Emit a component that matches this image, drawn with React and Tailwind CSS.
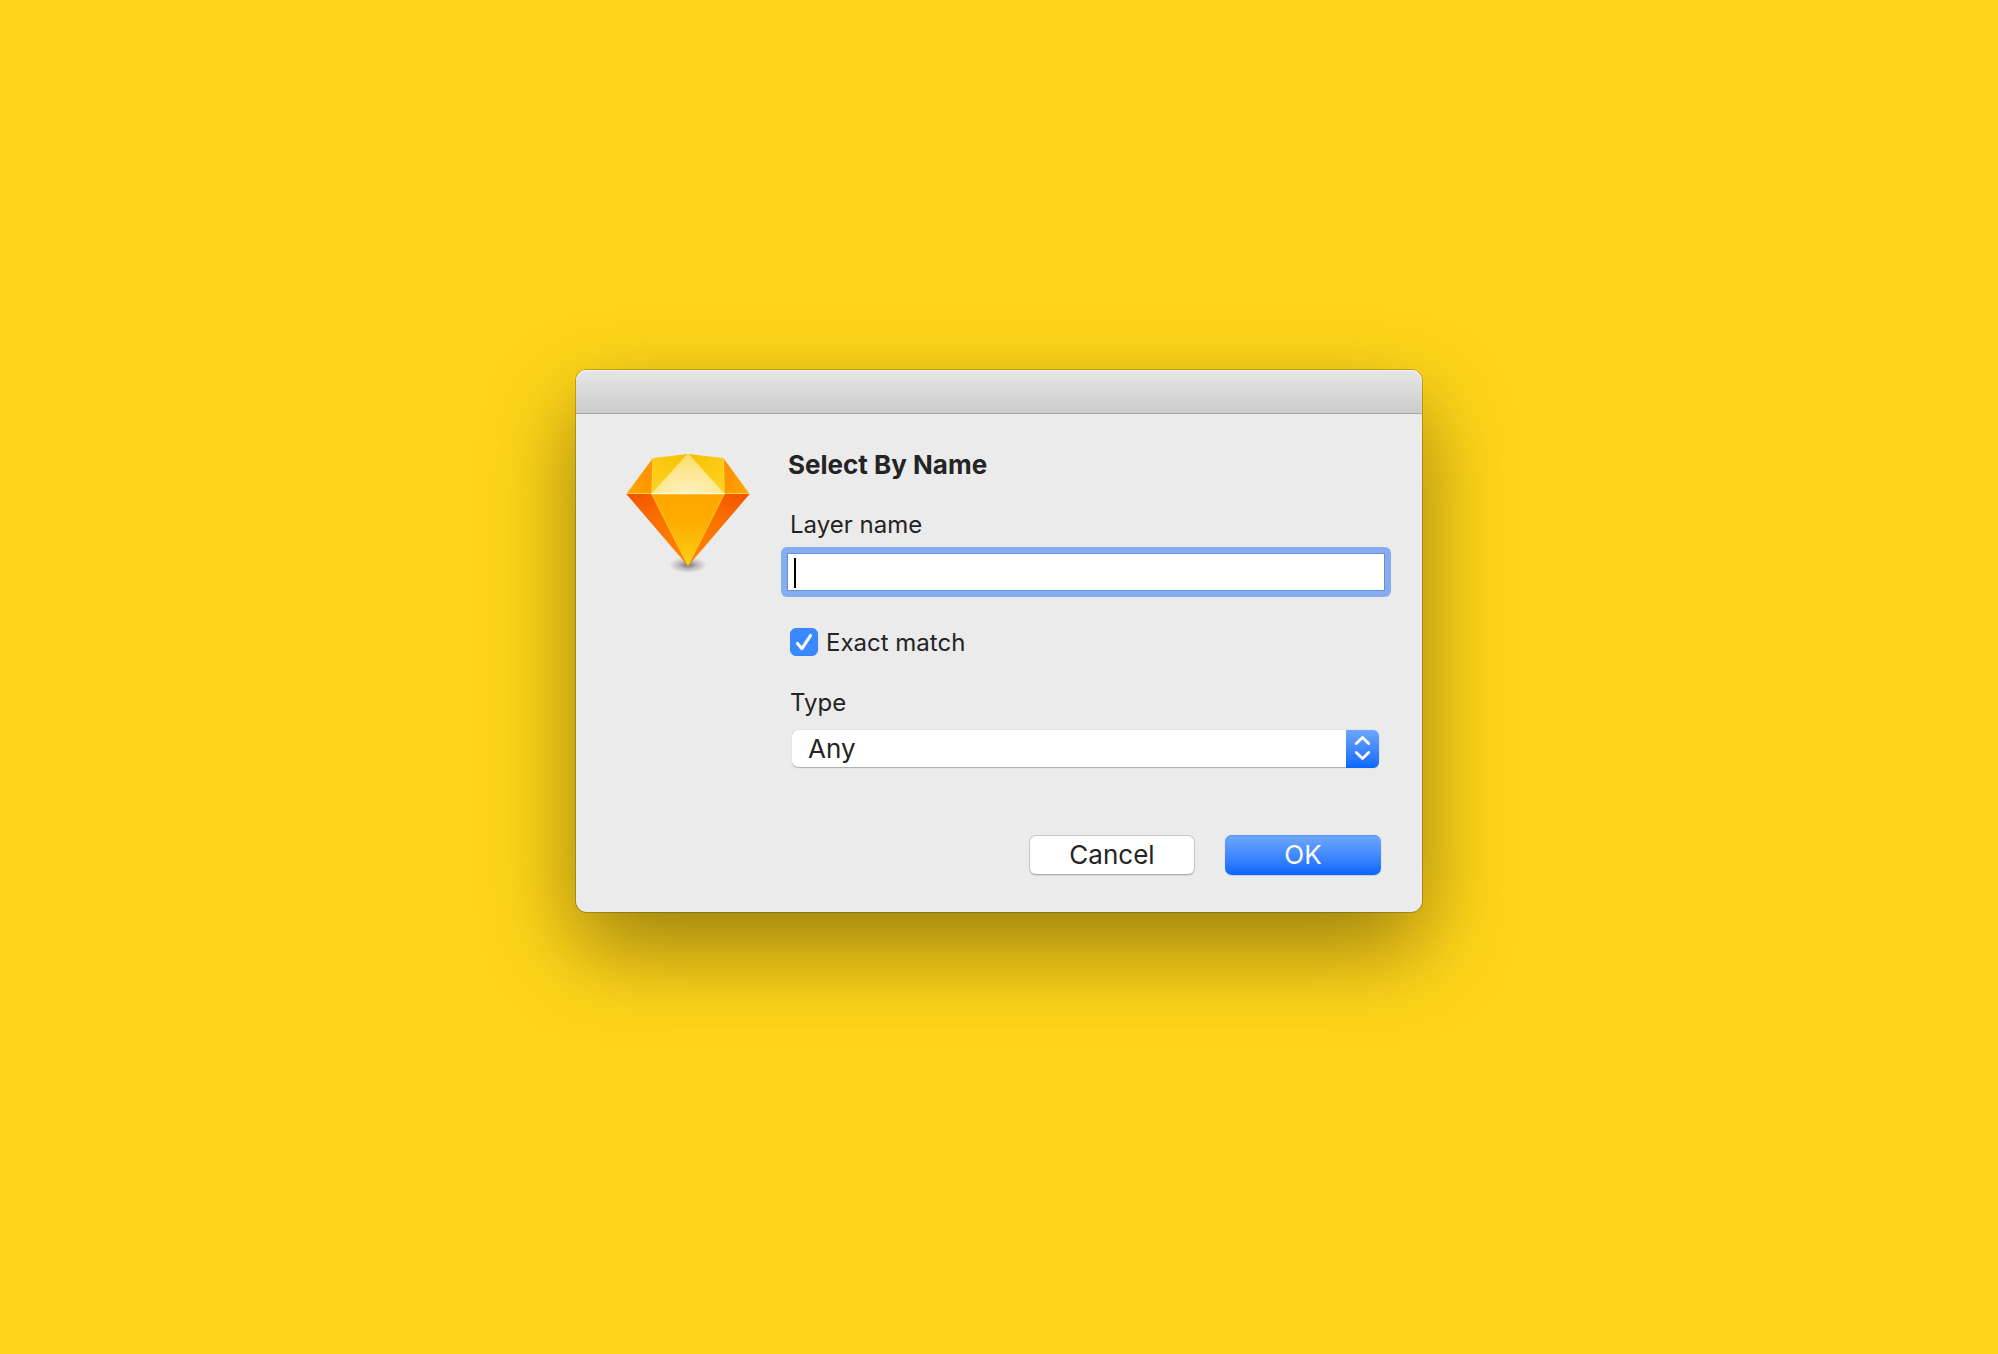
function SketchLogo() {
  return (
    <svg viewBox="0 0 160 140" className="w-40 shrink-0" role="img" aria-label="Sketch">
      <defs>
        <linearGradient id="front" x1="0" y1="0" x2="0" y2="1">
          <stop offset="0" stopColor="#ffa600" />
          <stop offset="0.4" stopColor="#ffad00" />
          <stop offset="1" stopColor="#fdd015" />
        </linearGradient>
        <linearGradient id="sideLeft" x1="0" y1="0" x2="0.6" y2="1">
          <stop offset="0" stopColor="#f25200" />
          <stop offset="0.5" stopColor="#fb7000" />
          <stop offset="1" stopColor="#ff8300" />
        </linearGradient>
        <linearGradient id="sideRight" x1="1" y1="0" x2="0.4" y2="1">
          <stop offset="0" stopColor="#f25200" />
          <stop offset="0.5" stopColor="#fb7000" />
          <stop offset="1" stopColor="#ff8300" />
        </linearGradient>
        <linearGradient id="crownLeft" x1="1" y1="0" x2="0" y2="1">
          <stop offset="0" stopColor="#ff9000" />
          <stop offset="0.5" stopColor="#ff9800" />
          <stop offset="1" stopColor="#ffac00" />
        </linearGradient>
        <linearGradient id="crownRight" x1="0" y1="0" x2="1" y2="1">
          <stop offset="0" stopColor="#ff9000" />
          <stop offset="0.5" stopColor="#ff9800" />
          <stop offset="1" stopColor="#ffac00" />
        </linearGradient>
        <linearGradient id="facetLeft" x1="1" y1="0" x2="0" y2="1">
          <stop offset="0" stopColor="#f9c000" />
          <stop offset="1" stopColor="#fed226" />
        </linearGradient>
        <linearGradient id="facetRight" x1="0" y1="0" x2="1" y2="1">
          <stop offset="0" stopColor="#f9c000" />
          <stop offset="1" stopColor="#fed226" />
        </linearGradient>
        <radialGradient id="table" cx="0.5" cy="1" r="0.95">
          <stop offset="0" stopColor="#fef1c0" />
          <stop offset="1" stopColor="#fcdf70" />
        </radialGradient>
        <radialGradient id="ground">
          <stop offset="0" stopColor="#000" stopOpacity="0.5" />
          <stop offset="0.5" stopColor="#000" stopOpacity="0.2" />
          <stop offset="1" stopColor="#000" stopOpacity="0" />
        </radialGradient>
      </defs>
      <ellipse cx="78" cy="125" rx="19" ry="8" fill="url(#ground)" />
      <path d="M16.3 54H42L78 126Z" fill="url(#sideLeft)" />
      <path d="M139.7 54H114L78 126Z" fill="url(#sideRight)" />
      <path d="M41.6 54H114.4L78 126.3Z" fill="url(#front)" />
      <path d="M16.3 54L43 18L42 54Z" fill="url(#crownLeft)" />
      <path d="M139.7 54L113.3 18L114 54Z" fill="url(#crownRight)" />
      <path d="M43 18L78 14L41.6 54Z" fill="url(#facetLeft)" />
      <path d="M113.3 18L78 14L114.4 54Z" fill="url(#facetRight)" />
      <path d="M78 14L114.4 54H41.6Z" fill="url(#table)" />
      <g fill="none" strokeLinejoin="round">
        <path d="M41.8 54L78 125.5L114.2 54" stroke="#ffc21c" strokeWidth="1" />
        <path d="M43 18L42 54M113.3 18L114.2 54" stroke="#fed737" strokeWidth="1.2" />
        <path d="M17 53.5H42M114 53.5H139" stroke="#ffce2e" strokeWidth="1.2" />
        <path d="M42 53.5L78 14L114.2 53.5" stroke="#fee36a" strokeWidth="1" />
        <path d="M41.6 53.5H114.4" stroke="#fffbd8" strokeWidth="1.4" />
      </g>
    </svg>
  );
}

export default function App() {
  return (
    <main className="flex min-h-screen items-center justify-center bg-[#ffd519] pb-[72px] font-['Inter','Liberation_Sans',sans-serif] text-[#242424]">
      <form
        role="dialog"
        aria-labelledby="title"
        onSubmit={(e) => e.preventDefault()}
        className="w-full max-w-[846px] rounded-[11px] bg-[#ebebeb] shadow-[0_0_0_1px_rgba(0,0,0,0.2),0_36px_90px_rgba(0,0,0,0.41)]"
      >
        <div className="h-11 rounded-t-[11px] border-b border-[#a9a9a9] bg-linear-to-b from-[#e6e6e6] to-[#cccccc] shadow-[inset_0_1px_0_#f5f5f5]" />
        <div className="flex items-start gap-[17px] pr-[37px] pb-[37px] pl-[34px]">
          <div className="pt-[26px]">
            <SketchLogo />
          </div>
          <div className="flex min-w-0 flex-1 flex-col pt-[35px]">
            <h1 id="title" className="pl-px text-[26px] leading-8 font-bold">
              Select By Name
            </h1>
            <label htmlFor="layer" className="mt-7 pl-[3px] text-2xl leading-8">
              Layer name
            </label>
            <div className="relative -mx-1.5 mt-1.5 flex rounded-md bg-[#86adf2] p-1.5">
              <input
                id="layer"
                type="text"
                className="h-[38px] w-full border border-[#6890d8] bg-white px-2 text-2xl caret-transparent outline-none"
              />
              <span className="absolute top-[11px] left-[13px] h-[30px] w-[2px] bg-black" />
            </div>
            <div className="mt-[31px] flex items-start gap-2 pl-[3px]">
              <span className="relative flex">
                <input
                  id="exact"
                  type="checkbox"
                  defaultChecked
                  className="peer size-7 appearance-none rounded-md border border-[#b5b5b5] bg-white checked:border-[#3584fb] checked:bg-[#3b89ff]"
                />
                <svg
                  viewBox="0 0 28 28"
                  fill="none"
                  className="pointer-events-none absolute inset-0 hidden peer-checked:block"
                >
                  <path
                    d="M7.5 15.5L12 20.7L20.5 7.5"
                    stroke="#fff"
                    strokeWidth="3.1"
                    strokeLinecap="round"
                    strokeLinejoin="round"
                  />
                </svg>
              </span>
              <label htmlFor="exact" className="text-2xl leading-[30px]">
                Exact match
              </label>
            </div>
            <label htmlFor="type" className="mt-[29px] pl-[3px] text-2xl leading-8">
              Type
            </label>
            <div className="relative mt-[11px] mr-[6px] ml-[5px] flex">
              <select
                id="type"
                className="h-[38px] w-full appearance-none rounded-md bg-white pr-12 pl-4 text-[26px] leading-[38px] shadow-[0_0_1px_rgba(0,0,0,0.3),inset_0_-1px_0_#b0b0b0]"
              >
                <option>Any</option>
              </select>
              <span className="pointer-events-none absolute inset-y-0 right-0 w-[33px] rounded-r-md bg-linear-to-b from-[#6da5fb] to-[#0467ff]">
                <svg viewBox="0 0 33 38" fill="none" className="size-full">
                  <path
                    d="M10.3 13.5L16.5 7.5L22.7 13.5M10.3 22.5L16.5 28.5L22.7 22.5"
                    stroke="#fff"
                    strokeWidth="2.8"
                    strokeLinecap="round"
                    strokeLinejoin="round"
                  />
                </svg>
              </span>
            </div>
            <div className="mt-[67px] flex justify-end gap-[30px] pr-1">
              <button
                type="button"
                className="h-10 w-[166px] rounded-[7px] border border-[#c6c6c6] border-b-[#b0b0b0] bg-white text-[26px] leading-[38px] shadow-[0_1px_1px_rgba(0,0,0,0.1)]"
              >
                Cancel
              </button>
              <button
                type="submit"
                className="h-10 w-[156px] rounded-[7px] bg-linear-to-b from-[#6fa8fc] to-[#0266ff] text-[26px] leading-10 text-white shadow-[inset_0_1px_0_#5594f2,0_1px_1px_rgba(0,0,0,0.12)]"
              >
                OK
              </button>
            </div>
          </div>
        </div>
      </form>
    </main>
  );
}
